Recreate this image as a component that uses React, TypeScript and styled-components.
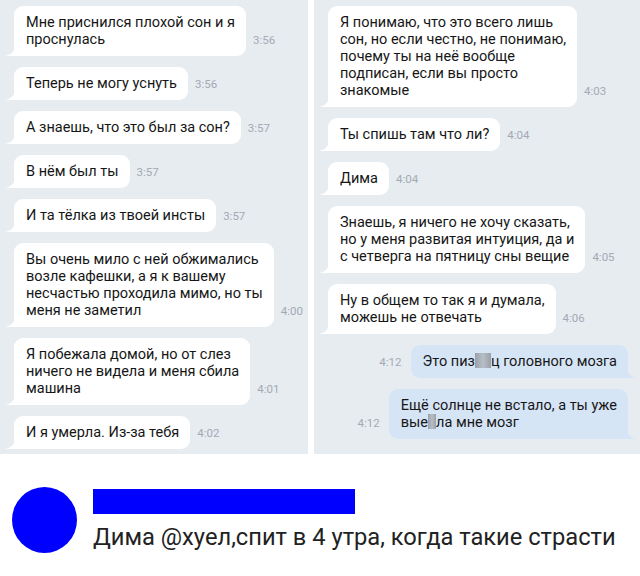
import React from "react";
import styled, { createGlobalStyle } from "styled-components";

const Global = createGlobalStyle`
  html, body { margin: 0; padding: 0; background: #ffffff; }
  body { width: 640px; height: 576px; overflow: hidden; font-family: Roboto, "Liberation Sans", Arial, sans-serif; }
`;

const Page = styled.div`
  width: 640px;
  height: 576px;
  display: flex;
  flex-direction: column;
  background: #ffffff;
`;

const Chats = styled.div`
  display: flex;
  gap: 6px;
  height: 454px;
`;

const Panel = styled.div<{ $w?: number }>`
  ${(p) => (p.$w ? `width: ${p.$w}px;` : "flex: 1;")}
  background: #e7ecf1;
  display: flex;
  flex-direction: column;
  gap: 11px;
  padding: 6px 12px 0 14px;
  box-sizing: border-box;
`;

const Row = styled.div<{ $out?: boolean }>`
  display: flex;
  align-items: flex-end;
  flex-direction: ${(p) => (p.$out ? "row-reverse" : "row")};
`;

const Bubble = styled.div<{ $out?: boolean }>`
  position: relative;
  background: ${(p) => (p.$out ? "#d6e5f6" : "#ffffff")};
  color: #161616;
  font-size: 14.5px;
  line-height: 17px;
  padding: 8px 11px 8px 12px;
  border-radius: 9px;
  ${(p) => (p.$out ? "border-bottom-right-radius: 0;" : "border-bottom-left-radius: 0;")}
  white-space: nowrap;
`;

const Tail = styled.svg<{ $out?: boolean }>`
  position: absolute;
  bottom: 0;
  width: 10px;
  height: 10px;
  ${(p) => (p.$out ? "right: -9px; transform: scaleX(-1);" : "left: -9px;")}
`;

const Time = styled.span<{ $out?: boolean }>`
  font-size: 11.5px;
  color: #a2aab4;
  padding-bottom: 9px;
  ${(p) => (p.$out ? "margin-right: 9px;" : "margin-left: 7px;")}
`;

const Censor = styled.span<{ $w: number }>`
  display: inline-block;
  width: ${(p) => p.$w}px;
  height: 15px;
  vertical-align: -2px;
  background: linear-gradient(90deg, #9aa0a8, #b8bec6, #9aa0a8);
  filter: blur(0.6px);
`;

const Footer = styled.div`
  display: flex;
  align-items: center;
  gap: 16px;
  padding: 33px 0 0 12px;
`;

const Avatar = styled.div`
  width: 65px;
  height: 66px;
  border-radius: 50%;
  background: #0000ff;
  flex: none;
`;

const Meta = styled.div`
  display: flex;
  flex-direction: column;
  gap: 9px;
`;

const NameBar = styled.div`
  width: 262px;
  height: 25px;
  background: #0000ff;
  margin-top: -1px;
`;

const Comment = styled.div`
  font-size: 23.7px;
  line-height: 28px;
  color: #222222;
  white-space: nowrap;
`;

type Msg = { lines: React.ReactNode[]; time: string; out?: boolean };

const left: Msg[] = [
  { lines: ["Мне приснился плохой сон и я", "проснулась"], time: "3:56" },
  { lines: ["Теперь не могу уснуть"], time: "3:56" },
  { lines: ["А знаешь, что это был за сон?"], time: "3:57" },
  { lines: ["В нём был ты"], time: "3:57" },
  { lines: ["И та тёлка из твоей инсты"], time: "3:57" },
  {
    lines: [
      "Вы очень мило с ней обжимались",
      "возле кафешки, а я к вашему",
      "несчастью проходила мимо, но ты",
      "меня не заметил",
    ],
    time: "4:00",
  },
  {
    lines: ["Я побежала домой, но от слез", "ничего не видела и меня сбила", "машина"],
    time: "4:01",
  },
  { lines: ["И я умерла. Из-за тебя"], time: "4:02" },
];

const right: Msg[] = [
  {
    lines: [
      "Я понимаю, что это всего лишь",
      "сон, но если честно, не понимаю,",
      "почему ты на неё вообще",
      "подписан, если вы просто",
      "знакомые",
    ],
    time: "4:03",
  },
  { lines: ["Ты спишь там что ли?"], time: "4:04" },
  { lines: ["Дима"], time: "4:04" },
  {
    lines: [
      "Знаешь, я ничего не хочу сказать,",
      "но у меня развитая интуиция, да и",
      "с четверга на пятницу сны вещие",
    ],
    time: "4:05",
  },
  { lines: ["Ну в общем то так я и думала,", "можешь не отвечать"], time: "4:06" },
  {
    lines: [
      <>
        Это пиз<Censor $w={16} />ц головного мозга
      </>,
    ],
    time: "4:12",
    out: true,
  },
  {
    lines: [
      "Ещё солнце не встало, а ты уже",
      <>
        вые<Censor $w={8} />ла мне мозг
      </>,
    ],
    time: "4:12",
    out: true,
  },
];

function Message({ m }: { m: Msg }) {
  return (
    <Row $out={m.out}>
      <Bubble $out={m.out}>
        {m.lines.map((l, i) => (
          <React.Fragment key={i}>
            {i > 0 && <br />}
            {l}
          </React.Fragment>
        ))}
        <Tail $out={m.out} viewBox="0 0 10 10">
          <path d="M10 0 C10 5 6 9 0 10 L10 10 Z" fill={m.out ? "#d6e5f6" : "#ffffff"} />
        </Tail>
      </Bubble>
      <Time $out={m.out}>{m.time}</Time>
    </Row>
  );
}

export default function App() {
  return (
    <Page>
      <Global />
      <Chats>
        <Panel $w={308}>
          {left.map((m, i) => (
            <Message key={i} m={m} />
          ))}
        </Panel>
        <Panel>
          {right.map((m, i) => (
            <Message key={i} m={m} />
          ))}
        </Panel>
      </Chats>
      <Footer>
        <Avatar />
        <Meta>
          <NameBar />
          <Comment>Дима @хуел,спит в 4 утра, когда такие страсти</Comment>
        </Meta>
      </Footer>
    </Page>
  );
}
